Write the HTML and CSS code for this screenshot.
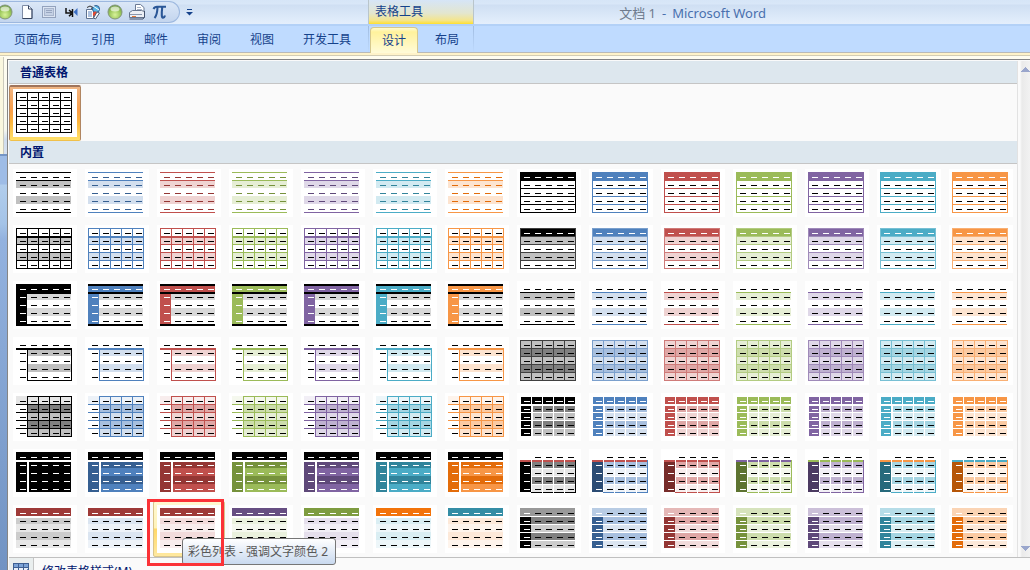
FILE: index.html
```html
<!DOCTYPE html>
<html lang="zh-CN">
<head>
<meta charset="utf-8">
<title>文档 1 - Microsoft Word</title>
<link rel="stylesheet" href="styles.css">
</head>
<body>
<div class="app">
  <header class="titlebar">
    <div class="quick" role="toolbar" aria-label="快速访问工具栏">
      <button class="quick-btn" aria-label="命令"><svg width="16" height="16" viewBox="0 0 16 16"><use href="#ball"/></svg></button>
      <button class="quick-btn" aria-label="新建"><svg width="16" height="16" viewBox="0 0 16 16"><path d="M3.500 1.500h6l3.500 3.500v9.500h-9.500z" fill="#fdfeff" stroke="#7e8ca6"/><path d="M9.500 1.500v3.500h3.500M13 5v9.500h-9.500" fill="none" stroke="#34435e"/></svg></button>
      <button class="quick-btn" aria-label="视图"><svg width="16" height="16" viewBox="0 0 16 16"><rect x="1.500" y="2.500" width="13" height="11" fill="#dce5f3" stroke="#93a2bd"/><rect x="3.500" y="4.500" width="9" height="7" fill="#c5d1e5" stroke="#a9b6cd"/><path d="M5 6.500h6M5 8.500h6" stroke="#98a6c0"/></svg></button>
      <button class="quick-btn" aria-label="换行"><svg width="16" height="16" viewBox="0 0 16 16"><path d="M3 4v5h5M6 6l3.200 3-3.200 3.200M9.500 5v8" fill="none" stroke="#111" stroke-width="1.500"/><path d="M14.500 4v8l-4-4z" fill="#3c6fc4"/></svg></button>
      <button class="quick-btn" aria-label="查找"><svg width="16" height="16" viewBox="0 0 16 16"><path d="M1.500 5.500h7v9h-7z" fill="#fff" stroke="#5d718f"/><path d="M3 8h4M3 10h4M3 12h4" stroke="#5d83bd"/><path d="M2 3.500q3-3 6 0l-2 1" fill="none" stroke="#333"/><circle cx="11" cy="5" r="3.500" fill="#58b7e8" stroke="#315a8c"/><path d="M8 2l6 4" stroke="#fff"/><circle cx="10.500" cy="10" r="2.600" fill="#e54830"/><path d="M12 8l2.500 1-4 6-2-1z" fill="#f7f9fc" stroke="#52617a"/></svg></button>
      <button class="quick-btn" aria-label="命令"><svg width="16" height="16" viewBox="0 0 16 16"><use href="#ball"/></svg></button>
      <button class="quick-btn" aria-label="打印"><svg width="16" height="16" viewBox="0 0 16 16"><path d="M6.500 .5h5l3.500 3v7h-8.500z" fill="#fff" stroke="#6b7a95"/><path d="M8 3.500h4M8 5.500h5" stroke="#a8b4c8"/><path d="M.5 8.500l3-2h9l3 1v6h-15z" fill="#eceff5" stroke="#67758e"/><path d="M1 10.500h12" stroke="#8895ac"/><path d="M3 12.500h4" stroke="#e17736"/><path d="M.5 15h13.500l1.500-2V7" fill="none" stroke="#43516c"/></svg></button>
      <button class="quick-btn" aria-label="公式"><svg width="16" height="16" viewBox="0 0 16 16"><path d="M2.500 5Q3.500 2.800 6 2.800H15M6.500 3.500Q6.200 11 3.500 14M11.200 3.500Q10 14 12 13.700 13.500 13.500 14 11.500" fill="none" stroke="#2b5797" stroke-width="2.100"/></svg></button>
    </div>
    <button class="quick-more" aria-label="自定义快速访问工具栏"><svg width="7" height="7" viewBox="0 0 7 7"><path d="M1 .5h5" stroke="#15428b"/><path d="M0 3h7L3.500 6.500z" fill="#15428b"/></svg></button>
    <div class="context-title">表格工具</div>
    <h1 class="doc-title"><span class="doc-name">文档 1</span><span>-</span><span>Microsoft Word</span></h1>
  </header>

  <nav class="tabs" aria-label="功能区">
    <button class="tab">页面布局</button>
    <button class="tab">引用</button>
    <button class="tab">邮件</button>
    <button class="tab">审阅</button>
    <button class="tab">视图</button>
    <button class="tab">开发工具</button>
    <div class="context-tabs">
      <button class="tab tab-active">设计</button>
      <button class="tab">布局</button>
    </div>
  </nav>

  <main class="workspace">
    <div class="gutter"><div class="gutter-ribbon"></div></div>
    <section class="gallery">
      <div class="gallery-main">
        <div class="gallery-list">
          <h2 class="group-title">普通表格</h2>
          <div class="group" id="plain"></div>
          <h2 class="group-title">内置</h2>
          <div class="group" id="builtin"></div>
        </div>
        <div class="scroll" aria-hidden="true">
          <svg width="9" height="5" viewBox="0 0 9 5" shape-rendering="crispEdges"><path d="M4 0h1v1h1v1h1v1h1v1h1v1H0V4h1V3h1V2h1V1h1z" fill="#9aa6cc"/></svg>
          <svg width="9" height="5" viewBox="0 0 9 5" shape-rendering="crispEdges"><path d="M4 5h1V4h1V3h1V2h1V1h1V0H0v1h1v1h1v1h1v1h1z" fill="#9aa6cc"/></svg>
        </div>
      </div>
      <button class="command">
        <span class="command-icon"><svg width="16" height="16" viewBox="0 0 16 16" shape-rendering="crispEdges"><path d="M0 0h16v16H0z" fill="#3e5f92"/><path d="M1 1h4v3H1zM6 1h4v3H6zM11 1h4v3h-4z" fill="#7ba2d6"/><path d="M1 5h4v3H1zM6 5h4v3H6zM11 5h4v3h-4zM1 9h4v3H1zM6 9h4v3H6z" fill="#e9f0fa"/><path d="M11 8l4-2v3l-5 6-2-2z" fill="#6686b8"/></svg></span>
        <span>修改表格样式(M)</span>
      </button>
    </section>
  </main>
</div>

<svg width="0" height="0" class="defs" aria-hidden="true">
  <defs>
    <radialGradient id="ballFill" cx=".5" cy=".7" r=".65"><stop offset="0" stop-color="#d8f29a"/><stop offset=".6" stop-color="#9cc85c"/><stop offset="1" stop-color="#6f9c48"/></radialGradient>
    <g id="ball"><circle cx="8" cy="8" r="7" fill="url(#ballFill)" stroke="#84967c"/><ellipse cx="8" cy="5" rx="4.500" ry="2.500" fill="#fff" opacity=".6"/></g>
  </defs>
</svg>
<script src="gallery.js"></script>
</body>
</html>
```

FILE: styles.css
```css
* {
  box-sizing: border-box;
}

body {
  margin: 0;
  font-family: "Noto Sans", "Noto Sans CJK SC", sans-serif;
  font-size: 12px;
  color: #15428b;
}

button {
  margin: 0;
  padding: 0;
  border: 0;
  background: none;
  font: inherit;
  color: inherit;
}

svg {
  display: block;
}

.defs {
  position: absolute;
}

.app {
  display: flex;
  flex-direction: column;
  height: 100vh;
  overflow: hidden;
}

.titlebar {
  display: flex;
  flex: none;
  align-items: stretch;
  height: 26px;
  background: linear-gradient(#d6e5f7 0, #d9e7f8 4px, #cfdff3 5px, #e4effc 24px);
  border-bottom: 2px solid #b3d1f7;
}

.quick {
  display: flex;
  align-items: center;
  width: 180px;
  height: 22px;
  margin-top: 1px;
  overflow: hidden;
  background: linear-gradient(#dbe7f7, #c3d5ee);
  border: 1px solid #9db8df;
  border-left: 0;
  border-radius: 0 11px 11px 0;
}

.quick-btn {
  display: grid;
  flex: none;
  place-items: center;
  width: 22px;
}

.quick-btn:first-child {
  margin-left: -6px;
}

.quick-more {
  display: grid;
  place-items: center;
  width: 19px;
}

.context-title {
  width: 106px;
  margin-left: 169px;
  padding-left: 6px;
  line-height: 24px;
  background: linear-gradient(#d6e5f7, #e3e6cf 55%, #f4e58c 85%, #ffdf2e);
  border: 1px solid #b9c5cb;
  border-width: 0 1px;
}

.doc-title {
  display: flex;
  flex: 1;
  gap: 6px;
  justify-content: flex-end;
  margin: 0;
  padding-right: 264px;
  font-size: 13px;
  font-weight: 400;
  line-height: 26px;
  white-space: nowrap;
  color: #4a70ae;
}

.doc-name {
  color: #6f7b8d;
}

.tabs {
  display: flex;
  flex: none;
  gap: 5px;
  height: 27px;
  padding-left: 2px;
  background: #bfdbff;
  border-bottom: 1px solid #b9bab8;
}

.tab {
  height: 26px;
  padding: 1px 12px 0;
  line-height: 26px;
  white-space: nowrap;
}

.context-tabs {
  display: flex;
  gap: 5px;
  width: 106px;
  padding-left: 1px;
  border: 1px solid;
  border-width: 0 1px;
  border-image: linear-gradient(#9fbbe0, #bfdbff) 1;
}

.tab-active {
  height: 26px;
  margin-top: 1px;
  padding: 0 11px;
  line-height: 24px;
  background: linear-gradient(#fffbd0 0, #fff29c 4px, #fffbd8);
  border: 1px solid #d5c88e;
  border-bottom: 0;
  border-radius: 4px 4px 0 0;
}

.workspace {
  display: flex;
  flex: 1;
  min-height: 0;
  padding-top: 6px;
  background: linear-gradient(#fff3c9 0, #fff3c9 2px, #d3cdb4 2px, #d3cdb4 3px, #fffdf0 3px, #fffdf0 6px, #8aa9d6 6px);
}

.gutter {
  flex: none;
  width: 7px;
  background: linear-gradient(#9ebce6 0, #9ebce6 125px, #b1cdec 126px, #a4c3e7 165px, #93b2df 180px, #7193c3);
}

.gutter-ribbon {
  height: 99px;
  margin-top: -2px;
  background: linear-gradient(#fffdf0, #f7f7ee 75%, #cfdcee 85%, #d7e1ef);
  border: 1px solid #7595c5;
  border-width: 0 0 2px;
  box-shadow: inset 3px 0 #faf7df, inset 4px 0 #cbcabd;
}

.gallery {
  flex: 1;
  min-width: 0;
  height: 540px;
  padding: 1px 0 0 1px;
  background: #fafafa;
  border: 1px solid #858585;
  border-width: 1px 0 0 1px;
}

.gallery-main {
  display: flex;
  border-bottom: 1px solid #c0c0c0;
}

.gallery-list {
  flex: 1;
  min-width: 0;
  border-right: 1px solid #e2e2e2;
}

.group-title {
  height: 23px;
  margin: 0;
  padding-left: 11px;
  font-size: 12px;
  font-weight: 700;
  line-height: 24px;
  color: #00156e;
  background: #dde7ee;
  border-bottom: 1px solid #c5c5c5;
}

.group {
  display: grid;
  grid-template-columns: repeat(14, 72px);
  padding-top: 1px;
}

.style {
  position: relative;
  height: 56px;
}

.style-btn {
  display: block;
  width: 72px;
  height: 56px;
  padding: 4px;
}

.thumb {
  background: #fff;
}

.selected .style-btn {
  padding: 2px 3px 3px;
  background: linear-gradient(#f0b685, #fa9e48 45%, #fcb43c 65%, #ffe16a);
  border: 1px solid #b08560;
  border-top: 2px solid #a0755c;
  border-bottom-color: #f0c04a;
  border-radius: 2px;
}

.hovered {
  z-index: 1;
}

.hovered .style-btn {
  padding: 3px;
  background: linear-gradient(#fff8d0, #fff3b8 48%, #ffd868 50%, #ffe9a0);
  border: 1px solid #d9c58c;
  border-radius: 2px;
}

.tooltip {
  position: absolute;
  top: 37px;
  left: 29px;
  min-width: 154px;
  height: 27px;
  padding: 0 5px;
  line-height: 26px;
  white-space: nowrap;
  color: #575757;
  background: linear-gradient(#fff, #c9d9ef);
  border: 1px solid #767676;
  border-radius: 3px;
}

.marker {
  position: absolute;
  top: -2px;
  left: -6px;
  width: 77px;
  height: 67px;
  border: 3px solid #fb3237;
  pointer-events: none;
}

.scroll {
  display: flex;
  flex: none;
  flex-direction: column;
  align-items: flex-end;
  justify-content: space-between;
  width: 12px;
  padding: 6px 0;
  overflow: hidden;
  background: linear-gradient(90deg, #fafafa 2px, #eaeaea 4px, #f2f2f2);
}

.command {
  display: flex;
  gap: 8px;
  width: 100%;
  line-height: 27px;
  color: #00156e;
  text-align: left;
}

.command-icon {
  width: 25px;
  height: 28px;
  padding: 5px 4px;
  background: #e9eeee;
  border-right: 1px solid #c5c5c5;
}
```

FILE: gallery.js
```js
// Theme shades, one entry per colour column: neutral, then accents 1 to 6.
const base = ['#000000', '#4f81bd', '#c0504d', '#9bbb59', '#8064a2', '#4bacc6', '#f79646'];
const dark = ['#000000', '#365f91', '#943634', '#76923c', '#5f497a', '#31849b', '#e36c0a'];
const deep = ['#000000', '#2c4c74', '#772c2a', '#5d7330', '#4c3b62', '#276a7c', '#b65608'];
const edge = ['#404040', '#7ba0cd', '#cf7b79', '#b3cc82', '#9f8ab9', '#78c0d4', '#f9b074'];
const mid = ['#808080', '#a7bfde', '#dfa7a6', '#cdddac', '#bfb1d0', '#a5d5e2', '#fbcaa2'];
const light = ['#c0c0c0', '#d3dfee', '#efd3d2', '#e6eed5', '#dfd8e8', '#d2eaf1', '#fde4d0'];
const pale = ['#e6e6e6', '#edf2f8', '#f8eded', '#f5f8ee', '#f2eff6', '#edf6f9', '#fef4ec'];
const soft = ['#cccccc', '#dbe5f1', '#f2dbdb', '#eaf1dd', '#e5dfec', '#daeef3', '#fde9d9'];
const head = ['#999999', '#b8cce4', '#e5b8b7', '#d6e3bc', '#ccc0d9', '#b6dde8', '#fbd4b4'];
const listHead = ['#9e3a38', '#9e3a38', '#9e3a38', '#664e82', '#7e9c40', '#f2730a', '#348da5'];
const bar = ['#c0504d', '#c0504d', '#c0504d', '#8064a2', '#9bbb59', '#f79646', '#4bacc6'];
const names = ['', ' - 强调文字颜色 1', ' - 强调文字颜色 2', ' - 强调文字颜色 3', ' - 强调文字颜色 4', ' - 强调文字颜色 5', ' - 强调文字颜色 6'];

// Rectangle given by its left, top, right and bottom edges.
const box = (x1, y1, x2, y2, fill) =>
  `<rect x="${x1}" y="${y1}" width="${x2 - x1}" height="${y2 - y1}" fill="${fill}"/>`;

// The short strokes that stand for cell text.
function dashes(colour) {
  let out = '';
  for (let r = 0; r < 5; r++) {
    for (let c = 0; c < 5; c++) {
      const fill = colour(r, c);
      if (fill) out += box(7 + 11 * c, 8 + 8 * r, 13 + 11 * c, 9 + 8 * r, fill);
    }
  }
  return out;
}

const hLines = (ys, x1, x2, fill) => ys.map(y => box(x1, y, x2, y + 1, fill)).join('');
const vLines = (xs, y1, y2, fill) => xs.map(x => box(x, y1, x + 1, y2, fill)).join('');
const black = () => '#000';
const headWhite = r => (r === 0 ? '#fff' : '#000');
const edgeWhite = (r, c) => (r === 0 || c === 0 ? '#fff' : '#000');
const allY = [3, 11, 19, 27, 35, 43];
const allX = [3, 14, 25, 36, 47, 58];
const rows = [[13, 19], [20, 27], [28, 35], [36, 43]];

const plainGrid = () => hLines(allY, 3, 59, '#000') + vLines(allX, 3, 44, '#000') + dashes(black);

const lightShading = i => box(3, 12, 58, 19, light[i]) + box(3, 27, 58, 35, light[i]) +
  hLines([3, 11, 43], 3, 58, base[i]) + dashes(() => dark[i]);

const lightGrid = i => box(3, 12, 59, 19, light[i]) + box(3, 27, 59, 35, light[i]) +
  hLines([3, 11, 12, 19, 27, 35, 43], 3, 59, base[i]) + vLines(allX, 3, 44, base[i]) + dashes(black);

const mediumShading2 = i => box(3, 3, 58, 13, '#000') + box(3, 5, 58, 11, base[i]) +
  box(14, 13, 58, 19, '#d8d8d8') + box(14, 27, 58, 35, '#d8d8d8') +
  box(3, 13, 14, 43, base[i]) + box(3, 43, 58, 45, '#000') + dashes(edgeWhite);

const mediumList2 = i => box(14, 13, 58, 19, light[i]) + box(14, 27, 58, 35, light[i]) +
  box(3, 11, 59, 13, base[i]) + vLines([14, 58], 11, 44, base[i]) + hLines([43], 14, 59, base[i]) + dashes(black);

const mediumGrid2 = i => box(3, 3, 59, 11, pale[i]) + box(14, 11, 59, 19, mid[i]) +
  box(14, 19, 59, 27, light[i]) + box(14, 27, 59, 35, mid[i]) + box(14, 35, 59, 43, light[i]) +
  hLines([11, 19, 27, 35], 3, 59, base[i]) + hLines([3, 43], 14, 59, base[i]) +
  vLines(allX.slice(1), 3, 44, base[i]) + dashes(black);

const darkList = i => box(3, 3, 58, 11, '#000') + box(3, 13, 14, 43, dark[i]) +
  box(16, 13, 58, 43, base[i]) + box(16, 13, 58, 19, dark[i]) + box(16, 27, 58, 35, dark[i]) + dashes(() => '#fff');

const colorfulList = i => box(3, 3, 58, 11, listHead[i]) + box(3, 13, 58, 43, pale[i]) +
  box(3, 13, 58, 19, soft[i]) + box(3, 27, 58, 35, soft[i]) + dashes(headWhite);

const lightList = i => box(3, 3, 59, 12, base[i]) + hLines([19, 27, 35, 43], 3, 59, base[i]) +
  vLines([3, 58], 3, 44, base[i]) + dashes(headWhite);

const mediumShading1 = i => box(3, 3, 59, 11, base[i]) + box(3, 12, 59, 19, light[i]) +
  box(3, 28, 59, 35, light[i]) + hLines(allY, 3, 59, edge[i]) + vLines([3, 58], 3, 44, edge[i]) + dashes(headWhite);

const mediumList1 = i => box(3, 12, 58, 19, light[i]) + box(3, 27, 58, 35, light[i]) +
  hLines([11, 43], 3, 58, base[i]) + dashes(black);

const mediumGrid1 = i => box(3, 3, 59, 44, light[i]) + box(3, 11, 59, 19, mid[i]) +
  box(3, 27, 59, 35, mid[i]) + hLines(allY, 3, 59, edge[i]) + vLines(allX, 3, 44, edge[i]) + dashes(black);

const mediumGrid3 = i => {
  let out = '';
  for (let c = 0; c < 5; c++) {
    const x = 4 + 11 * c;
    out += box(x, 4, x + 10, 11, base[i]);
    rows.forEach(([y1, y2], r) => {
      const fill = c === 0 ? base[i] : r % 2 ? light[i] : mid[i];
      out += box(c === 1 ? x + 1 : x, y1, x + 10, y2, fill);
    });
  }
  return out + dashes(edgeWhite);
};

const colorfulShading = i => {
  let out = box(3, 11, 14, 13, bar[i]) + box(3, 13, 14, 43, deep[i]);
  for (let c = 1; c < 5; c++) {
    const x = 4 + 11 * c;
    out += box(x, 11, x + 10, 13, bar[i]);
    rows.forEach(([y1, y2], r) => { out += box(x, y1, x + 10, y2, r % 2 ? pale[i] : mid[i]); });
    out += box(c === 1 ? x - 1 : x, 43, x + 10, 44, base[i]);
  }
  return out + vLines([58], 11, 44, base[i]) +
    dashes((r, c) => (c === 0 ? (r === 0 ? '' : '#fff') : '#000'));
};

const colorfulGrid = i => {
  let out = box(3, 3, 58, 11, head[i]);
  [[12, 19], [20, 27], [28, 35], [36, 43]].forEach(([y1, y2], r) => {
    out += box(3, y1, 14, y2, dark[i]) + box(14, y1, 58, y2, r % 2 ? soft[i] : mid[i]);
  });
  return out + dashes((r, c) => (c === 0 ? '#fff' : '#000'));
};

const layout = [
  [['浅色底纹', lightShading], ['浅色列表', lightList]],
  [['浅色网格', lightGrid], ['中等深浅底纹 1', mediumShading1]],
  [['中等深浅底纹 2', mediumShading2], ['中等深浅列表 1', mediumList1]],
  [['中等深浅列表 2', mediumList2], ['中等深浅网格 1', mediumGrid1]],
  [['中等深浅网格 2', mediumGrid2], ['中等深浅网格 3', mediumGrid3]],
  [['深色列表', darkList], ['彩色底纹', colorfulShading]],
  [['彩色列表', colorfulList], ['彩色网格', colorfulGrid]]
];

function cell(label, art, state = '', extra = '') {
  return `<div class="style ${state}"><button class="style-btn" aria-label="${label}">` +
    `<svg class="thumb" width="64" height="48" viewBox="0 0 64 48" shape-rendering="crispEdges">${art}</svg>` +
    `</button>${extra}</div>`;
}

document.getElementById('plain').innerHTML = cell('网格型', plainGrid(), 'selected');

document.getElementById('builtin').innerHTML = layout.map(pair => pair.map(([name, draw]) =>
  names.map((suffix, i) => {
    const label = name + suffix;
    return draw === colorfulList && i === 2
      ? cell(label, draw(i), 'hovered', `<div class="tooltip" role="tooltip">${label}</div><div class="marker"></div>`)
      : cell(label, draw(i));
  }).join('')).join('')).join('');
```
